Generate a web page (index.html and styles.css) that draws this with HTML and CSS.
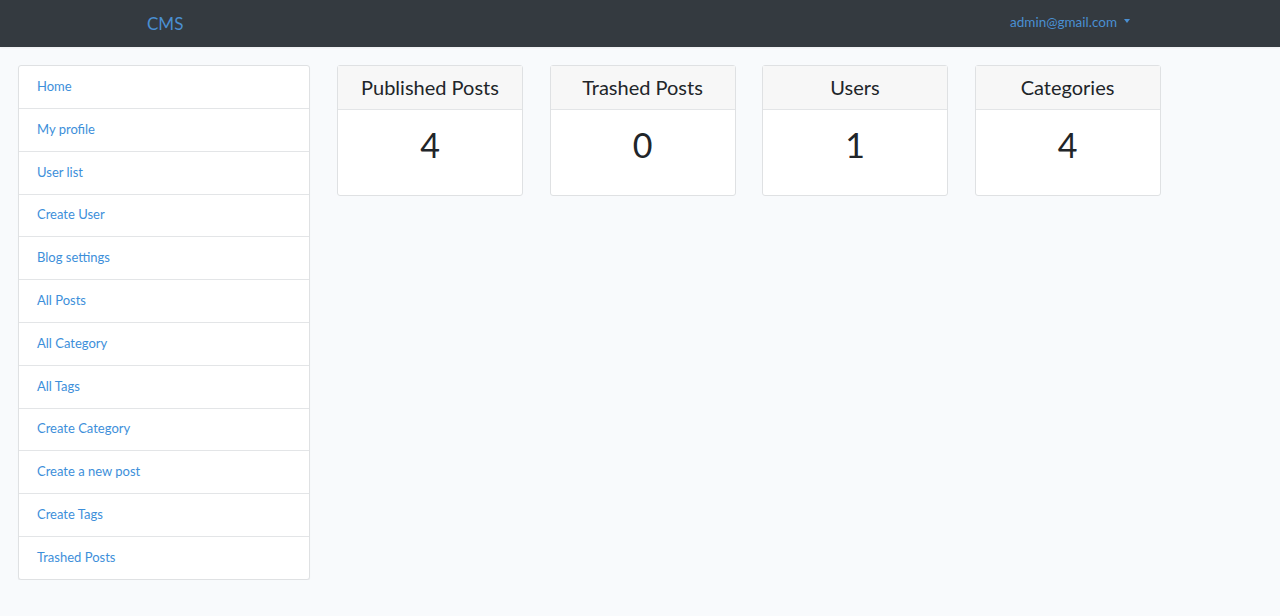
FILE: index.html
```html
<!DOCTYPE html>
<html lang="en">
<head>
<meta charset="utf-8">
<title>CMS</title>
<link rel="stylesheet" href="styles.css">
</head>
<body>
<nav class="navbar">
  <a class="brand" href="#">CMS</a>
  <a class="user" href="#">admin@gmail.com <span class="caret"></span></a>
</nav>
<div class="page">
  <ul class="sidebar">
    <li><a href="#">Home</a></li>
    <li><a href="#">My profile</a></li>
    <li><a href="#">User list</a></li>
    <li><a href="#">Create User</a></li>
    <li><a href="#">Blog settings</a></li>
    <li><a href="#">All Posts</a></li>
    <li><a href="#">All Category</a></li>
    <li><a href="#">All Tags</a></li>
    <li><a href="#">Create Category</a></li>
    <li><a href="#">Create a new post</a></li>
    <li><a href="#">Create Tags</a></li>
    <li><a href="#">Trashed Posts</a></li>
  </ul>
  <main class="cards">
    <div class="card"><div class="card-header">Published Posts</div><div class="card-body">4</div></div>
    <div class="card"><div class="card-header">Trashed Posts</div><div class="card-body">0</div></div>
    <div class="card"><div class="card-header">Users</div><div class="card-body">1</div></div>
    <div class="card"><div class="card-header">Categories</div><div class="card-body">4</div></div>
  </main>
</div>
</body>
</html>
```
FILE: styles.css
```css
* { box-sizing: border-box; }
html, body { margin: 0; }
body {
  background: #f8fafc;
  font-family: "Lato", "Noto Sans", sans-serif;
  color: #212529;
  font-size: 13px;
}
a { text-decoration: none; }
.navbar {
  height: 47px;
  background: #343a40;
  display: flex;
  align-items: center;
  justify-content: space-between;
  padding: 0 150px 3px 147px;
  box-shadow: 0 1px 2px rgba(0,0,0,.05);
}
.brand {
  color: #4a8fd2;
  font-size: 17px;
  line-height: 24px;
  margin-top: 4px;
}
.user {
  color: #4a8fd2;
  font-size: 13.5px;
  display: flex;
  align-items: center;
}
.caret {
  display: inline-block;
  margin-left: 7px;
  width: 0; height: 0;
  border-left: 3.5px solid transparent;
  border-right: 3.5px solid transparent;
  border-top: 4px solid #4a8fd2;
  position: relative;
  top: -1px;
}
.page {
  display: flex;
  align-items: flex-start;
  padding: 18px 0 0 18px;
}
.sidebar {
  list-style: none;
  margin: 0;
  padding: 0;
  width: 292px;
  background: #fff;
  border: 1px solid #dfe1e3;
  border-radius: 3px;
  box-shadow: 0 1px 1px rgba(0,0,0,.06);
}
.sidebar li {
  height: 42.8px;
  display: flex;
  align-items: center;
  padding: 0 18px 2px;
  border-top: 1px solid #e3e5e7;
}
.sidebar li:first-child { border-top: 0; height: 42px; }
.sidebar a { color: #3d8fda; font-size: 13px; }
.cards {
  display: flex;
  gap: 26.5px;
  margin-left: 27px;
}
.card {
  width: 186px;
  background: #fff;
  border: 1px solid #dfe1e3;
  border-radius: 3px;
}
.card-header {
  height: 44px;
  background: #f7f7f7;
  border-bottom: 1px solid #e3e5e7;
  display: flex;
  align-items: center;
  justify-content: center;
  font-size: 20px;
  padding-bottom: 1px;
  color: #212529;
}
.card-body {
  height: 85px;
  display: flex;
  align-items: center;
  justify-content: center;
  font-size: 34px;
  padding-bottom: 16px;
  color: #212529;
}
```
